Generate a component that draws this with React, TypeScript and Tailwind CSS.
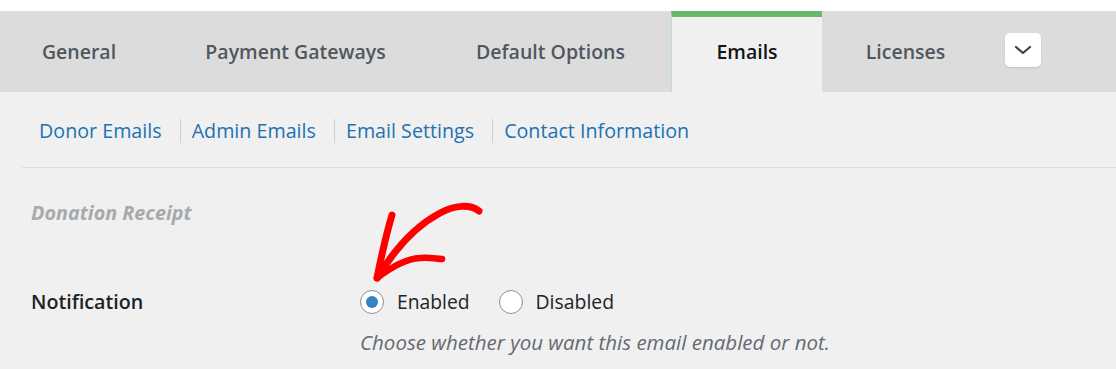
import React from "react";

const tabs = [
  { label: "General", w: "w-[164px]" },
  { label: "Payment Gateways", w: "w-[269px]" },
  { label: "Default Options", w: "w-[241px]" },
  { label: "Emails", w: "w-[151px]", active: true },
  { label: "Licenses", w: "w-[167px]" },
];

const links = ["Donor Emails", "Admin Emails", "Email Settings", "Contact Information"];

export default function App() {
  return (
    <div
      className="relative w-[1116px] h-[369px] overflow-hidden bg-[#f0f0f0]"
      style={{ fontFamily: "'Open Sans', 'Noto Sans', sans-serif" }}
    >
      <div className="h-[11px] bg-white" />
      <div className="flex h-[81px] bg-[#dcdcdc]">
        <div className="-ml-[3px] flex">
          {tabs.map((t) =>
            t.active ? (
              <div
                key={t.label}
                className={`${t.w} flex items-center justify-center border-t-[6px] border-l border-t-[#68b96b] border-l-[#bfe0c0] bg-[#f0f0f0] pb-[6px] text-[19.5px] font-semibold text-[#101517]`}
              >
                {t.label}
              </div>
            ) : (
              <div
                key={t.label}
                className={`${t.w} flex items-center justify-center text-[19.5px] font-semibold text-[#50575e]`}
              >
                {t.label}
              </div>
            )
          )}
        </div>
        <div className="ml-[16px] mt-[22px] flex h-[34px] w-[36px] items-center justify-center rounded-[5px] bg-white shadow-[0_1px_2px_rgba(0,0,0,0.12)]">
          <svg width="18" height="10" viewBox="0 0 18 10" fill="none">
            <path d="M2 2 L9 8 L16 2" stroke="#3c434a" strokeWidth="2.2" strokeLinecap="round" strokeLinejoin="round" />
          </svg>
        </div>
      </div>

      <div className="ml-[22px]">
        <div className="flex items-center pl-[17px] pt-[27px] pb-[24px]">
          {links.map((l, i) => (
            <React.Fragment key={l}>
              {i > 0 && <span className="ml-[18px] mr-[11px] h-[24px] w-px bg-[#cdd0d3]" />}
              <span className="text-[19.7px] leading-[24px] text-[#2271b1]">{l}</span>
            </React.Fragment>
          ))}
        </div>
        <div className="h-px bg-[#dcdcde]" />

        <div className="pl-[9px]">
          <div className="mt-[33px] text-[19.8px] leading-[24px] font-bold italic text-[#a7aaad]">
            Donation Receipt
          </div>
          <div className="mt-[65px] flex">
            <div className="w-[329px] text-[19.7px] leading-[24px] font-semibold text-[#1d2327]">Notification</div>
            <div className="flex flex-col">
              <div className="flex h-[24px] items-center">
                <span className="flex h-[24px] w-[24px] items-center justify-center rounded-full border border-[#8c8f94] bg-white">
                  <span className="h-[12px] w-[12px] rounded-full bg-[#3582c4]" />
                </span>
                <span className="ml-[13px] text-[19.3px] leading-[24px] text-[#1d2327]">Enabled</span>
                <span className="ml-[29px] h-[24px] w-[24px] rounded-full border border-[#8c8f94] bg-white" />
                <span className="ml-[13px] text-[19.4px] leading-[24px] text-[#1d2327]">Disabled</span>
              </div>
              <div className="mt-[16px] text-[20.5px] leading-[24px] italic text-[#646970]">
                Choose whether you want this email enabled or not.
              </div>
            </div>
          </div>
        </div>
      </div>

      <svg className="pointer-events-none absolute left-0 top-0" width="1116" height="369" viewBox="0 0 1116 369" fill="none">
        <g stroke="#ff0000" strokeLinecap="round" strokeLinejoin="round" fill="none">
          <path d="M479 211 C470 204 455 205 440 213 C414 227 394 250 378 277" strokeWidth="7" />
          <path d="M392 215 C386 235 381 258 377 278" strokeWidth="7" />
          <path d="M377 278 C390 268 404 259 420 258 C430 257 437 259 442 259" strokeWidth="6.5" />
        </g>
      </svg>
    </div>
  );
}
